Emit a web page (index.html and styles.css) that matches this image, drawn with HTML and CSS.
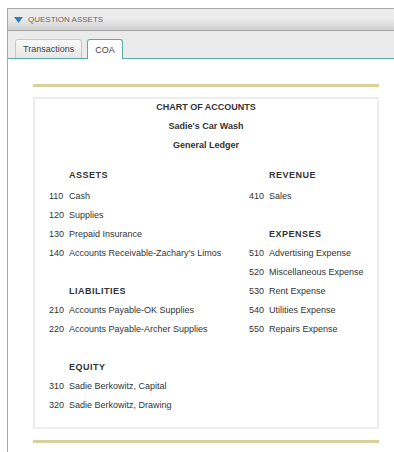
FILE: index.html
```html
<!DOCTYPE html>
<html lang="en">
<head>
    <meta charset="UTF-8">
    <meta name="viewport" content="width=device-width, initial-scale=1.0">
    <title>Question Assets - COA</title>
    <link rel="stylesheet" href="styles.css">
</head>
<body>
    <div class="panel">
        <div class="panel-header">
            <svg class="caret" width="9" height="6" viewBox="0 0 9 6"><polygon points="0,0 9,0 4.5,6" fill="#2b7fbd"/></svg>
            <span>QUESTION ASSETS</span>
        </div>

        <div class="tab-strip">
            <a href="#" class="tab">Transactions</a>
            <a href="#" class="tab active">COA</a>
        </div>

        <div class="tab-body">
            <div class="gold-bar"></div>

            <div class="coa-card">
                <div class="coa-title">
                    <div>CHART OF ACCOUNTS</div>
                    <div>Sadie's Car Wash</div>
                    <div>General Ledger</div>
                </div>

                <div class="coa-columns">
                    <div class="acct-col">
                        <div class="acct-head first">ASSETS</div>
                        <div class="acct-row"><span class="acct-no">110</span>Cash</div>
                        <div class="acct-row"><span class="acct-no">120</span>Supplies</div>
                        <div class="acct-row"><span class="acct-no">130</span>Prepaid Insurance</div>
                        <div class="acct-row"><span class="acct-no">140</span>Accounts Receivable-Zachary's Limos</div>

                        <div class="acct-head spaced">LIABILITIES</div>
                        <div class="acct-row"><span class="acct-no">210</span>Accounts Payable-OK Supplies</div>
                        <div class="acct-row"><span class="acct-no">220</span>Accounts Payable-Archer Supplies</div>

                        <div class="acct-head spaced">EQUITY</div>
                        <div class="acct-row"><span class="acct-no">310</span>Sadie Berkowitz, Capital</div>
                        <div class="acct-row"><span class="acct-no">320</span>Sadie Berkowitz, Drawing</div>
                    </div>

                    <div class="acct-col">
                        <div class="acct-head first">REVENUE</div>
                        <div class="acct-row"><span class="acct-no">410</span>Sales</div>

                        <div class="acct-head spaced">EXPENSES</div>
                        <div class="acct-row"><span class="acct-no">510</span>Advertising Expense</div>
                        <div class="acct-row"><span class="acct-no">520</span>Miscellaneous Expense</div>
                        <div class="acct-row"><span class="acct-no">530</span>Rent Expense</div>
                        <div class="acct-row"><span class="acct-no">540</span>Utilities Expense</div>
                        <div class="acct-row"><span class="acct-no">550</span>Repairs Expense</div>
                    </div>
                </div>
            </div>

            <div class="gold-bar"></div>
        </div>
    </div>
</body>
</html>
```

FILE: styles.css
```css
/* Basic styling */
* {
    margin: 0;
    padding: 0;
    box-sizing: border-box;
    font-family: "Liberation Sans", Arial, sans-serif;
}

body {
    background-color: #fff;
    color: #333;
}

.panel {
    margin: 8px 0 0 7px;
    min-height: calc(100vh - 8px);
    border-top: 1px solid #aaa;
    border-left: 1px solid #aaa;
}

.panel-header {
    height: 22px;
    display: flex;
    align-items: center;
    gap: 5px;
    padding-left: 6px;
    background: linear-gradient(#ededed 0%, #ececec 45%, #cfcfcf 100%);
    border-bottom: 1px solid #a5a5a5;
    font-size: 8px;
    color: #666;
}

.caret {
    display: block;
}

.tab-strip {
    height: 28px;
    display: flex;
    align-items: flex-end;
    gap: 5px;
    padding-left: 7px;
    background-color: #ebebeb;
    border-bottom: 1px solid #55aca4;
}

.tab {
    height: 19px;
    padding: 0 7px;
    display: flex;
    align-items: center;
    font-size: 9px;
    color: #444;
    text-decoration: none;
    background: linear-gradient(#fafafa, #e6e6e6);
    border: 1px solid #c8c8c8;
    border-bottom: none;
    border-radius: 3px 3px 0 0;
}

.tab.active {
    height: 20px;
    margin-bottom: -1px;
    background: #fff;
    border-color: #55aca4;
}

.tab-body {
    padding: 25px 15px 0 25px;
}

.gold-bar {
    height: 3px;
    background-color: #d9cf9f;
}

.coa-card {
    margin: 10px 0 11px;
    padding: 0 14px 12px;
    border: 2px solid #ededed;
    font-size: 9px;
    color: #333;
}

.coa-title {
    text-align: center;
    font-weight: bold;
    line-height: 19px;
    margin-top: -1px;
    margin-bottom: 11px;
}

.coa-columns {
    display: grid;
    grid-template-columns: 200px auto;
}

.acct-row,
.acct-head {
    height: 19px;
    line-height: 19px;
    white-space: nowrap;
}

.acct-no {
    display: inline-block;
    width: 20px;
}

.acct-head {
    padding-left: 20px;
    font-weight: bold;
    letter-spacing: 0.5px;
}

.acct-head.first {
    margin-bottom: 2px;
}

.acct-head.spaced {
    margin-top: 19px;
}
```
